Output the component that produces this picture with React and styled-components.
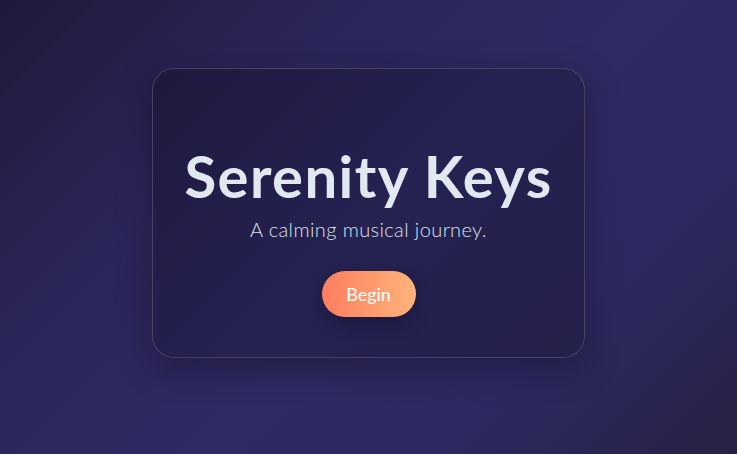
import React from 'react';
import styled, { createGlobalStyle } from 'styled-components';

const GlobalStyle = createGlobalStyle`
  html, body {
    margin: 0;
    padding: 0;
    height: 100%;
  }
  body {
    font-family: Lato, "Noto Sans", sans-serif;
    background: linear-gradient(135deg, #1e1a3b 0%, #2b2659 30%, #2f2a62 55%, #2d2960 75%, #252244 100%);
    min-height: 100vh;
  }
`;

const Page = styled.div`
  min-height: 100vh;
  display: flex;
  justify-content: center;
  align-items: flex-start;
  padding-top: 68px;
  box-sizing: border-box;
`;

const Card = styled.div`
  width: 433px;
  height: 290px;
  box-sizing: border-box;
  border-radius: 22px;
  border: 1px solid rgba(255, 255, 255, 0.16);
  background: linear-gradient(135deg, rgba(28, 25, 58, 0.85) 0%, rgba(35, 32, 78, 0.8) 50%, rgba(34, 31, 70, 0.85) 100%);
  box-shadow: 0 10px 34px rgba(16, 14, 36, 0.45);
  display: flex;
  flex-direction: column;
  align-items: center;
  padding-top: 74px;
`;

const Title = styled.h1`
  margin: 0;
  font-size: 58px;
  font-weight: 700;
  line-height: 1.15;
  color: #e2e8f0;
  letter-spacing: 1.4px;
`;

const Subtitle = styled.p`
  margin: 7px 0 0;
  font-size: 20px;
  font-weight: 300;
  color: #dde1ec;
  letter-spacing: 0.4px;
`;

const BeginButton = styled.button`
  margin-top: 30px;
  width: 94px;
  height: 46px;
  border: none;
  border-radius: 23px;
  background: linear-gradient(90deg, #ff7e5f, #feb47b);
  color: #ffffff;
  font-family: inherit;
  font-size: 18px;
  font-weight: 400;
  box-shadow: 0 6px 16px rgba(10, 8, 30, 0.35);
  cursor: pointer;
`;

export default function App() {
  return (
    <>
      <GlobalStyle />
      <Page>
        <Card>
          <Title>Serenity Keys</Title>
          <Subtitle>A calming musical journey.</Subtitle>
          <BeginButton>Begin</BeginButton>
        </Card>
      </Page>
    </>
  );
}
